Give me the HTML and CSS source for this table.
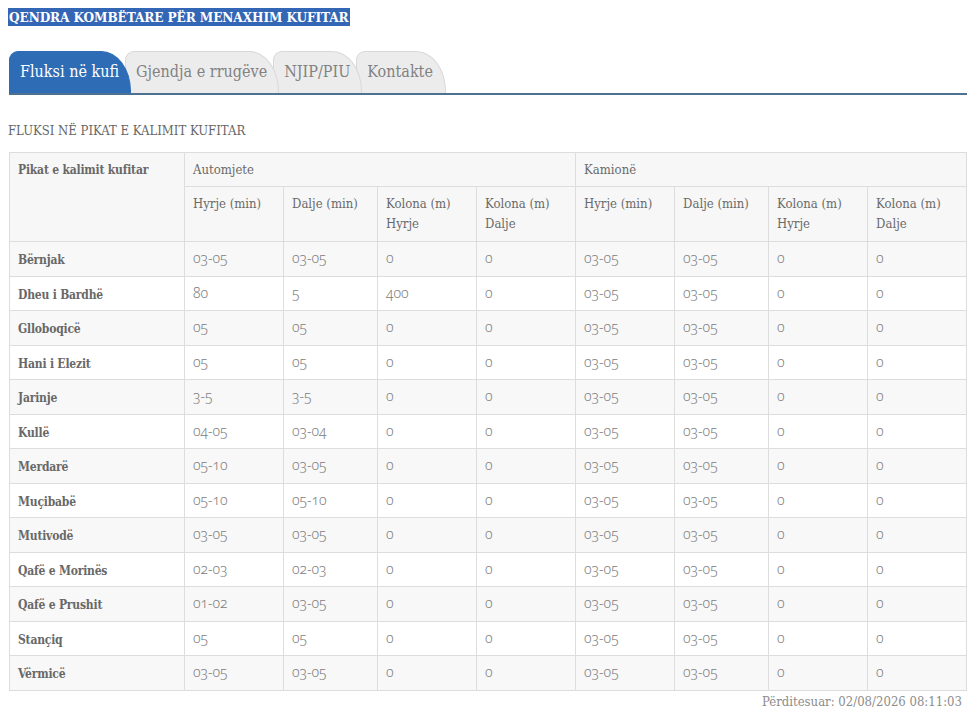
FILE: index.html
```html
<!DOCTYPE html>
<html lang="sq">
<head>
<meta charset="utf-8">
<title>Fluksi në kufi</title>
<link rel="stylesheet" href="styles.css">
</head>
<body>
<h1 class="site-title"><span class="sel">QENDRA KOMBËTARE PËR MENAXHIM KUFITAR</span></h1>
<nav class="tabs">
  <a class="tab active">Fluksi në kufi</a>
  <a class="tab t2">Gjendja e rrugëve</a>
  <a class="tab t3">NJIP/PIU</a>
  <a class="tab t4">Kontakte</a>
</nav>
<h2 class="caption">FLUKSI NË PIKAT E KALIMIT KUFITAR</h2>
<table class="flux">
  <colgroup>
    <col class="c-name"><col class="c-a"><col class="c-b"><col class="c-a"><col class="c-a">
    <col class="c-a"><col class="c-b"><col class="c-a"><col class="c-a">
  </colgroup>
  <thead>
    <tr class="h1"><th rowspan="2" class="name">Pikat e kalimit kufitar</th><th colspan="4">Automjete</th><th colspan="4">Kamionë</th></tr>
    <tr><th>Hyrje (min)</th><th>Dalje (min)</th><th>Kolona (m)<br>Hyrje</th><th>Kolona (m)<br>Dalje</th><th>Hyrje (min)</th><th>Dalje (min)</th><th>Kolona (m)<br>Hyrje</th><th>Kolona (m)<br>Dalje</th></tr>
  </thead>
  <tbody>
    <tr><th>Bërnjak</th><td>03-05</td><td>03-05</td><td>0</td><td>0</td><td>03-05</td><td>03-05</td><td>0</td><td>0</td></tr>
    <tr><th>Dheu i Bardhë</th><td>80</td><td>5</td><td>400</td><td>0</td><td>03-05</td><td>03-05</td><td>0</td><td>0</td></tr>
    <tr><th>Glloboqicë</th><td>05</td><td>05</td><td>0</td><td>0</td><td>03-05</td><td>03-05</td><td>0</td><td>0</td></tr>
    <tr><th>Hani i Elezit</th><td>05</td><td>05</td><td>0</td><td>0</td><td>03-05</td><td>03-05</td><td>0</td><td>0</td></tr>
    <tr><th>Jarinje</th><td>3-5</td><td>3-5</td><td>0</td><td>0</td><td>03-05</td><td>03-05</td><td>0</td><td>0</td></tr>
    <tr><th>Kullë</th><td>04-05</td><td>03-04</td><td>0</td><td>0</td><td>03-05</td><td>03-05</td><td>0</td><td>0</td></tr>
    <tr><th>Merdarë</th><td>05-10</td><td>03-05</td><td>0</td><td>0</td><td>03-05</td><td>03-05</td><td>0</td><td>0</td></tr>
    <tr><th>Muçibabë</th><td>05-10</td><td>05-10</td><td>0</td><td>0</td><td>03-05</td><td>03-05</td><td>0</td><td>0</td></tr>
    <tr><th>Mutivodë</th><td>03-05</td><td>03-05</td><td>0</td><td>0</td><td>03-05</td><td>03-05</td><td>0</td><td>0</td></tr>
    <tr><th>Qafë e Morinës</th><td>02-03</td><td>02-03</td><td>0</td><td>0</td><td>03-05</td><td>03-05</td><td>0</td><td>0</td></tr>
    <tr><th>Qafë e Prushit</th><td>01-02</td><td>03-05</td><td>0</td><td>0</td><td>03-05</td><td>03-05</td><td>0</td><td>0</td></tr>
    <tr><th>Stançiq</th><td>05</td><td>05</td><td>0</td><td>0</td><td>03-05</td><td>03-05</td><td>0</td><td>0</td></tr>
    <tr><th>Vërmicë</th><td>03-05</td><td>03-05</td><td>0</td><td>0</td><td>03-05</td><td>03-05</td><td>0</td><td>0</td></tr>
  </tbody>
</table>
<p class="updated">Përditesuar: 02/08/2026 08:11:03</p>
</body>
</html>
```
FILE: styles.css
```css
html, body { margin: 0; padding: 0; background: #fff; }
body {
  padding: 8px;
  font-family: "DejaVu Serif", "Liberation Serif", serif;
  font-stretch: condensed;
  color: #666;
}
.site-title {
  margin: 0;
  font-size: 13.5px;
  font-weight: bold;
  line-height: 18px;
  letter-spacing: -0.1px;
}
.sel {
  background: #3366b5;
  color: #fff;
  padding: 1px 1px;
}
.tabs {
  display: flex;
  margin: 25px 5px 0 1px;
  border-bottom: 2px solid #4f7190;
  height: 42px;
  align-items: flex-end;
}
.tab {
  position: relative;
  display: block;
  box-sizing: border-box;
  height: 42px;
  padding: 9px 11px 0 10px;
  font-size: 16px;
  line-height: 22px;
  color: #828282;
  background: #ececec;
  border: 1px solid #d8d8d8;
  border-bottom: 0;
  border-radius: 9px 30px 0 0 / 9px 40px 0 0;
  margin-right: -6px;
  white-space: nowrap;
}
.tab.active {
  background: #2e6cb6;
  border-color: #2e6cb6;
  color: #fff;
  z-index: 4;
}
.t2 { z-index: 3; }
.t3 { z-index: 2; }
.t4 { z-index: 1; padding-right: 12px; }
.caption {
  margin: 28px 0 0 0;
  font-size: 13px;
  font-weight: normal;
  line-height: 16px;
  color: #666;
}
.flux {
  margin: 13px 5px 0 1px;
  width: 958px;
  border-collapse: collapse;
  table-layout: fixed;
  font-size: 13px;
}
.c-name { width: 175px; }
.c-a { width: 99px; }
.c-b { width: 94px; }
.flux th, .flux td {
  border: 1px solid #dddddd;
  padding: 7px 8px;
  line-height: 20px;
  text-align: left;
  vertical-align: top;
}
.flux tr.h1 th { padding-bottom: 6px; }
.flux thead th {
  background: #f7f7f7;
  font-weight: normal;
  color: #6a6a6a;
}
.flux thead th.name, .flux tbody th {
  font-weight: bold;
  font-size: 12px;
  letter-spacing: -0.2px;
  color: #686868;
}
.flux tbody th, .flux tbody td {
  line-height: 19.5px;
}
.flux tbody th {
  padding-top: 9px;
  padding-bottom: 5px;
}
.flux tbody td {
  padding-top: 6px;
  padding-bottom: 8px;
}
.flux tbody tr:nth-child(odd) { background: #f8f8f8; }
.flux td {
  font-family: "Noto Sans", "Open Sans", sans-serif;
  font-stretch: normal;
  font-weight: 300;
  font-feature-settings: "onum" 1;
  font-variant-numeric: oldstyle-nums;
  color: #808080;
  font-size: 14px;
}
.updated {
  margin: 1px 10px 0 0;
  text-align: right;
  font-size: 13px;
  line-height: 20px;
  color: #8c8c8c;
}
```
